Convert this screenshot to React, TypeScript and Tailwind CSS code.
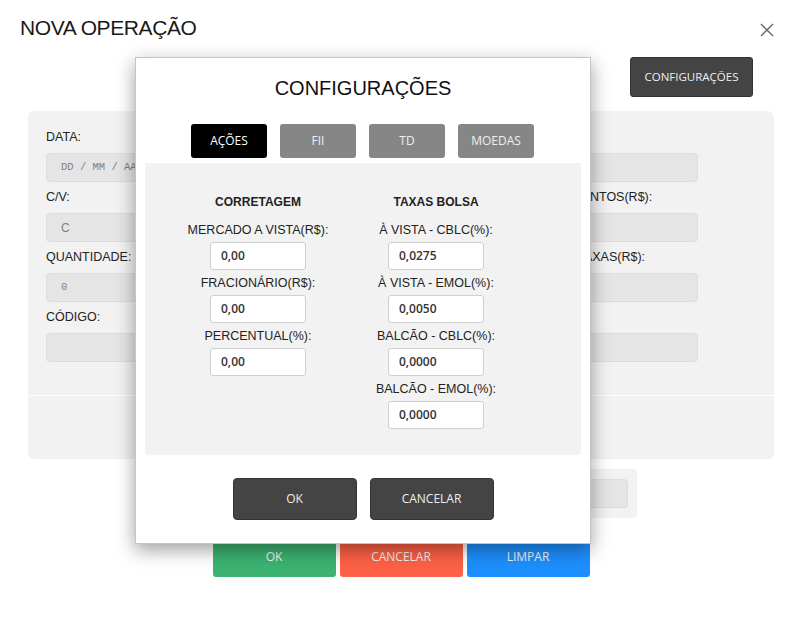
import React from 'react';

const btnFont = "font-['Open_Sans','DejaVu_Sans',sans-serif]";

const BgField = ({ label, value, mono }: { label?: string; value?: string; mono?: boolean }) => (
  <div>
    <div className="h-[16px] leading-[16px] text-[12.5px] text-[#222] mb-[8px] whitespace-nowrap">{label || '\u00a0'}</div>
    <div
      className={`h-[29px] mb-[7px] rounded-[4px] bg-[#e5e5e5] border border-[#dcdcdc] flex items-center text-[#808080] whitespace-nowrap overflow-hidden ${
        mono ? "font-['Liberation_Mono',monospace] text-[10.5px] pl-[14px]" : 'text-[12px] pl-[14px]'
      }`}
    >
      {value}
    </div>
  </div>
);

const CfgField = ({ label, value }: { label: string; value: string }) => (
  <div className="flex flex-col items-center mb-[5px]">
    <div className="h-[16px] leading-[16px] text-[12.5px] text-[#222] mb-[4px] whitespace-nowrap">{label}</div>
    <div
      className={`w-[96px] h-[28px] bg-white border border-[#cfcfcf] rounded-[3px] pl-[10px] flex items-center text-[12px] font-semibold text-[#333] ${btnFont}`}
    >
      {value}
    </div>
  </div>
);

const Tab = ({ label, active }: { label: string; active?: boolean }) => (
  <div
    className={`w-[76px] h-[34px] rounded-[3px] flex items-center justify-center text-[12px] ${btnFont} ${
      active ? 'bg-black text-white' : 'bg-[#868686] text-[#eeeeee]'
    }`}
  >
    {label}
  </div>
);

export default function App() {
  return (
    <div className="relative w-full h-[629px] bg-white overflow-hidden font-['Liberation_Sans',Arial,sans-serif]">
      {/* page behind the modal */}
      <div className="flex justify-between items-start pl-[20px] pr-[26px] pt-[14px]">
        <h1 className="text-[21px] leading-[28px] text-[#1a1a1a] font-normal tracking-[-0.4px]">NOVA OPERAÇÃO</h1>
        <svg width="14" height="14" viewBox="0 0 14 14" className="mt-[9px]">
          <path d="M1 1L13 13M13 1L1 13" stroke="#666" strokeWidth="1.4" />
        </svg>
      </div>

      <div className="flex justify-end pr-[47px] mt-[15px]">
        <div
          className={`w-[123px] h-[40px] rounded-[3px] bg-[#444] border border-[#333] flex items-center justify-center text-[11.5px] text-[#eee] ${btnFont}`}
        >
          CONFIGURAÇÕES
        </div>
      </div>

      <div className="ml-[28px] mr-[26px] mt-[14px] flex flex-col gap-px">
        <div className="h-[284px] bg-[#f2f2f2] rounded-t-[6px] pl-[18px] pr-[76px] pt-[18px] grid grid-cols-4 gap-x-[14px]">
          <div>
            <BgField label="DATA:" value="DD / MM / AAAA" mono />
            <BgField label="C/V:" value="C" />
            <BgField label="QUANTIDADE:" value="0" mono />
            <BgField label="CÓDIGO:" value="" />
          </div>
          <div>
            <BgField />
            <BgField />
            <BgField />
            <BgField />
          </div>
          <div>
            <BgField />
            <BgField />
            <BgField />
            <BgField />
          </div>
          <div>
            <BgField />
            <BgField label="DESCONTOS(R$):" />
            <BgField label="OUT. TAXAS(R$):" />
            <BgField />
          </div>
        </div>
        <div className="h-[63px] bg-[#f2f2f2] rounded-b-[6px]" />
      </div>

      <div className="flex justify-end pr-[163px] mt-[10px]">
        <div className="w-[300px] h-[49px] bg-[#f2f2f2] rounded-[4px] px-[9px] py-[10px]">
          <div className="h-[29px] bg-[#e5e5e5] border border-[#dcdcdc] rounded-[4px]" />
        </div>
      </div>

      <div className={`flex justify-center gap-[4px] mt-[19px] pl-[2px] text-[12px] text-[#f3f3f3] ${btnFont}`}>
        <div className="w-[123px] h-[40px] rounded-[3px] bg-[#3cb371] flex items-center justify-center">OK</div>
        <div className="w-[123px] h-[40px] rounded-[3px] bg-[#fe6145] flex items-center justify-center">CANCELAR</div>
        <div className="w-[123px] h-[40px] rounded-[3px] bg-[#1e8ffe] flex items-center justify-center">LIMPAR</div>
      </div>

      {/* configurações modal */}
      <div className="absolute left-[135px] top-[57px] w-[456px] h-[487px] bg-white border border-[#c4c4c4] shadow-[0_6px_18px_rgba(0,0,0,0.38)] flex flex-col">
        <h2 className="text-center text-[20px] leading-[24px] text-[#111] font-normal mt-[18px]">CONFIGURAÇÕES</h2>
        <div className="flex justify-center gap-[13px] mt-[24px] pr-[1px]">
          <Tab label="AÇÕES" active />
          <Tab label="FII" />
          <Tab label="TD" />
          <Tab label="MOEDAS" />
        </div>
        <div className="mx-[9px] mt-[5px] h-[292px] bg-[#f2f2f2] rounded-b-[4px] pt-[31px] flex">
          <div className="w-[156px] ml-[35px] flex flex-col items-center">
            <div className="h-[16px] leading-[16px] text-[12px] font-bold text-[#222] mb-[12px]">CORRETAGEM</div>
            <CfgField label="MERCADO A VISTA(R$):" value="0,00" />
            <CfgField label="FRACIONÁRIO(R$):" value="0,00" />
            <CfgField label="PERCENTUAL(%):" value="0,00" />
          </div>
          <div className="w-[130px] ml-[35px] flex flex-col items-center">
            <div className="h-[16px] leading-[16px] text-[12px] font-bold text-[#222] mb-[12px]">TAXAS BOLSA</div>
            <CfgField label="À VISTA - CBLC(%):" value="0,0275" />
            <CfgField label="À VISTA - EMOL(%):" value="0,0050" />
            <CfgField label="BALCÃO - CBLC(%):" value="0,0000" />
            <CfgField label="BALCÃO - EMOL(%):" value="0,0000" />
          </div>
        </div>
        <div className={`flex justify-center gap-[13px] mt-[23px] text-[12px] text-[#eee] ${btnFont}`}>
          <div className="w-[124px] h-[42px] rounded-[4px] bg-[#444] border border-[#333] flex items-center justify-center">OK</div>
          <div className="w-[124px] h-[42px] rounded-[4px] bg-[#444] border border-[#333] flex items-center justify-center">CANCELAR</div>
        </div>
      </div>
    </div>
  );
}
